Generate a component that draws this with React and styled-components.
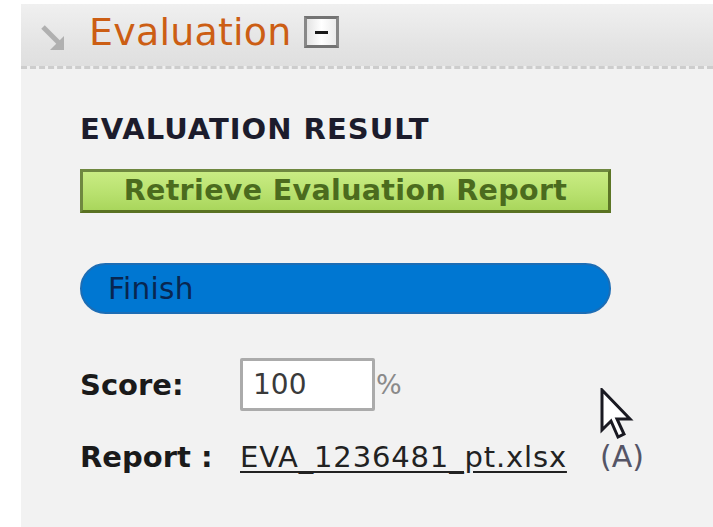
import React from "react";
import styled, { createGlobalStyle } from "styled-components";

const GlobalStyle = createGlobalStyle`
  html, body {
    margin: 0;
    padding: 0;
    background: #ffffff;
  }
  body {
    font-family: "DejaVu Sans", Verdana, sans-serif;
  }
`;

const Page = styled.div`
  width: 713px;
  height: 527px;
  overflow: hidden;
  display: flex;
  background: #ffffff;
`;

const Panel = styled.section`
  position: relative;
  margin-left: 21px;
  flex: 1;
  display: flex;
  flex-direction: column;
`;

const Header = styled.div`
  margin-top: 4px;
  height: 65px;
  display: flex;
  align-items: center;
  background: linear-gradient(#f0f0f0, #e3e3e3 70%, #dfdfdf);
  border-bottom: 3px dashed #cdcdcd;
  box-sizing: border-box;
  padding: 0 0 6px 19px;
`;

const ArrowIcon = () => (
  <svg width="28" height="30" viewBox="0 0 28 30" style={{ marginTop: 14 }}>
    <line x1="3" y1="3" x2="19" y2="19" stroke="#b0b0b0" strokeWidth="5" />
    <polygon points="24,12 24,26 10,26" fill="#b0b0b0" />
  </svg>
);

const Title = styled.h2`
  margin: 0 0 0 21px;
  font-size: 38px;
  font-weight: normal;
  letter-spacing: 0.2px;
  color: #cc5e14;
  line-height: 1;
`;

const Toggle = styled.button`
  margin-left: 12px;
  width: 35px;
  height: 32px;
  padding: 0;
  box-sizing: border-box;
  border: 3px solid #888;
  border-top-color: #737373;
  border-bottom-color: #737373;
  background: linear-gradient(90deg, #e4e4e4, #ffffff 50%, #ececec);
  display: flex;
  align-items: center;
  justify-content: center;

  &::after {
    content: "";
    width: 13px;
    height: 3px;
    background: #1a1a1a;
  }
`;

const Body = styled.div`
  flex: 1;
  background: #f2f2f2;
  padding: 43px 0 0 59px;
  display: flex;
  flex-direction: column;
`;

const SectionTitle = styled.h3`
  margin: 0;
  font-size: 29px;
  font-weight: bold;
  letter-spacing: 1px;
  color: #1c1c2c;
  line-height: 34px;
`;

const RetrieveButton = styled.button`
  margin-top: 23px;
  width: 531px;
  height: 44px;
  border: 3px solid #6f8840;
  border-right-color: #5c7526;
  border-bottom-color: #5a7222;
  background: linear-gradient(#c9ec83, #b7e06d 60%, #a9d65c);
  font-family: inherit;
  font-size: 28.5px;
  font-weight: bold;
  letter-spacing: 0.35px;
  color: #4b6b1e;
  padding: 0;
  line-height: 1;
`;

const StatusBar = styled.div`
  margin-top: 50px;
  width: 531px;
  height: 51px;
  box-sizing: border-box;
  border-radius: 26px;
  background: #0077d2;
  border: 2px solid #1c6db5;
  display: flex;
  align-items: center;
  padding-left: 26px;
  font-size: 29.5px;
  letter-spacing: 0.3px;
  color: #082650;
`;

const Row = styled.div`
  display: flex;
  align-items: center;
  margin-top: ${(p) => p.$gap}px;
`;

const Label = styled.span`
  width: ${(p) => p.$width || 160}px;
  font-size: 29px;
  font-weight: bold;
  color: #1a1a1a;
`;

const ScoreInput = styled.input`
  width: 135px;
  height: 53px;
  box-sizing: border-box;
  border: 3px solid #ababab;
  border-radius: 2px;
  background: #ffffff;
  font-family: inherit;
  font-size: 28px;
  color: #3a3a3a;
  padding: 0 0 0 10px;
  outline: none;
`;

const Unit = styled.span`
  font-size: 27px;
  color: #8a8a8a;
  margin-left: 1px;
`;

const FileLink = styled.a`
  font-size: 29px;
  letter-spacing: 0.85px;
  color: #222222;
  text-decoration: underline;
  text-underline-offset: 4px;
`;

const Variant = styled.span`
  margin-left: 33px;
  font-size: 30px;
  color: #555566;
`;

const Pointer = styled.svg`
  position: absolute;
  left: 579px;
  top: 388px;
`;

export default function App() {
  return (
    <>
      <GlobalStyle />
      <Page>
        <Panel>
          <Header>
            <ArrowIcon />
            <Title>Evaluation</Title>
            <Toggle aria-label="collapse" />
          </Header>
          <Body>
            <SectionTitle>EVALUATION RESULT</SectionTitle>
            <RetrieveButton>Retrieve Evaluation Report</RetrieveButton>
            <StatusBar>Finish</StatusBar>
            <Row $gap={44}>
              <Label>Score:</Label>
              <ScoreInput defaultValue="100" />
              <Unit>%</Unit>
            </Row>
            <Row $gap={28}>
              <Label>Report :</Label>
              <FileLink href="#">EVA_1236481_pt.xlsx</FileLink>
              <Variant>(A)</Variant>
            </Row>
          </Body>
          <Pointer width="38" height="54" viewBox="0 0 38 54">
            <path
              d="M2 2 L2 42 L11 33 L18 49 L24 46 L17 31 L30 31 Z"
              fill="#ffffff"
              stroke="#1a1a22"
              strokeWidth="3"
              strokeLinejoin="miter"
            />
          </Pointer>
        </Panel>
      </Page>
    </>
  );
}
